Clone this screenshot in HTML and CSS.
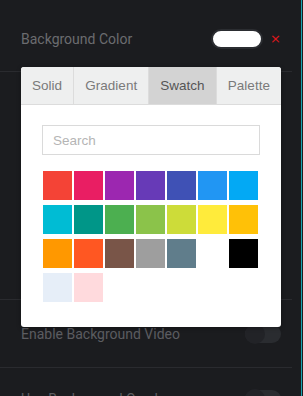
FILE: index.html
```html
<!DOCTYPE html>
<html lang="en">
<head>
    <meta charset="UTF-8"/>
    <meta name="viewport" content="width=device-width, initial-scale=1.0"/>
    <title>Background Settings</title>
    <link rel="stylesheet" href="styles.css">
</head>
<body>
    <div class="app">
        <div class="panel">
            <div class="row row-first">
                <span class="label">Background Color</span>
                <div class="controls">
                    <span class="color-pill"></span>
                    <span class="clear">&times;</span>
                </div>
            </div>
            <div class="row row-picker"></div>
            <div class="row row-dim">
                <span class="label">Enable Background Video</span>
                <span class="toggle"></span>
            </div>
            <div class="row row-last">
                <span class="label">Use Background Overlay</span>
                <span class="toggle"></span>
            </div>
        </div>

        <div class="picker">
            <div class="tabs">
                <div class="tab">Solid</div>
                <div class="tab">Gradient</div>
                <div class="tab active">Swatch</div>
                <div class="tab">Palette</div>
            </div>
            <div class="picker-body">
                <input class="search" type="text" placeholder="Search"/>
                <div class="swatches">
                    <span class="swatch" style="background:#f44336"></span>
                    <span class="swatch" style="background:#e91e63"></span>
                    <span class="swatch" style="background:#9c27b0"></span>
                    <span class="swatch" style="background:#673ab7"></span>
                    <span class="swatch" style="background:#3f51b5"></span>
                    <span class="swatch" style="background:#2196f3"></span>
                    <span class="swatch" style="background:#03a9f4"></span>
                    <span class="swatch" style="background:#00bcd4"></span>
                    <span class="swatch" style="background:#009688"></span>
                    <span class="swatch" style="background:#4caf50"></span>
                    <span class="swatch" style="background:#8bc34a"></span>
                    <span class="swatch" style="background:#cddc39"></span>
                    <span class="swatch" style="background:#ffeb3b"></span>
                    <span class="swatch" style="background:#ffc107"></span>
                    <span class="swatch" style="background:#ff9800"></span>
                    <span class="swatch" style="background:#ff5722"></span>
                    <span class="swatch" style="background:#795548"></span>
                    <span class="swatch" style="background:#9e9e9e"></span>
                    <span class="swatch" style="background:#607d8b"></span>
                    <span class="swatch" style="background:#ffffff"></span>
                    <span class="swatch" style="background:#000000"></span>
                    <span class="swatch" style="background:#e6eef8"></span>
                    <span class="swatch" style="background:#ffdadd"></span>
                </div>
            </div>
        </div>
    </div>
</body>
</html>
```

FILE: styles.css
```css
body {
    margin: 0;
    background: #1b1c1f;
    font-family: Roboto, "Liberation Sans", sans-serif;
    overflow: hidden;
}

.app {
    position: relative;
    width: 301px;
    height: 396px;
    border-right: 1px solid #1aa3b2;
    overflow: hidden;
}

.panel {
    width: 292px;
}

.row {
    display: flex;
    align-items: center;
    justify-content: space-between;
    padding: 0 11px 0 21px;
    border-bottom: 1px solid #2a2b2f;
}

.row-first {
    padding-top: 6px;
    height: 65px;
}

.row-picker {
    height: 227px;
}

.row-dim {
    height: 67px;
}

.row-last {
    height: 62px;
    border-bottom: none;
}

.label {
    font-size: 14px;
    color: #6b6c6f;
}

.row-dim .label,
.row-last .label {
    color: #5c5d61;
}

.controls {
    display: flex;
    align-items: center;
}

.color-pill {
    width: 48px;
    height: 16px;
    background: #fff;
    border: 2px solid #2b2d31;
    border-radius: 12px;
}

.clear {
    margin-left: 7px;
    color: #e0161b;
    font-family: "DejaVu Sans", sans-serif;
    font-size: 13px;
    line-height: 1;
}

.toggle {
    position: relative;
    width: 36px;
    height: 18px;
    border-radius: 9px;
    background: #2a2c30;
}

.toggle::before {
    content: "";
    position: absolute;
    left: 0;
    top: -1px;
    width: 20px;
    height: 20px;
    border-radius: 50%;
    background: #222327;
}

/* colour picker popover */
.picker {
    position: absolute;
    top: 67px;
    left: 21px;
    width: 260px;
    height: 260px;
    background: #fff;
    border-radius: 3px;
    box-shadow: 0 1px 4px rgba(0, 0, 0, 0.35);
    overflow: hidden;
    font-family: "Liberation Sans", Arial, sans-serif;
}

.tabs {
    display: flex;
    height: 37px;
    background: #eeefef;
    border-bottom: 1px solid #dcdcdc;
}

.tab {
    flex: 1 1 auto;
    display: flex;
    align-items: center;
    justify-content: center;
    font-size: 13.5px;
    color: #7a7a7a;
    border-right: 1px solid #dcdcdc;
}

.tab:last-child {
    border-right: none;
}

.tab.active {
    background: #d3d3d3;
    color: #555;
}

.picker-body {
    padding: 20px 21px 0;
}

.search {
    display: block;
    width: 100%;
    height: 30px;
    box-sizing: border-box;
    border: 1px solid #dadada;
    padding: 0 10px;
    font-family: "Liberation Sans", Arial, sans-serif;
    font-size: 13.5px;
    outline: none;
}

.search::placeholder {
    color: #b5b5b5;
}

.swatches {
    display: grid;
    grid-template-columns: repeat(7, 29px);
    grid-auto-rows: 29px;
    column-gap: 2px;
    row-gap: 5px;
    margin-top: 16px;
    padding-left: 1px;
}
```
